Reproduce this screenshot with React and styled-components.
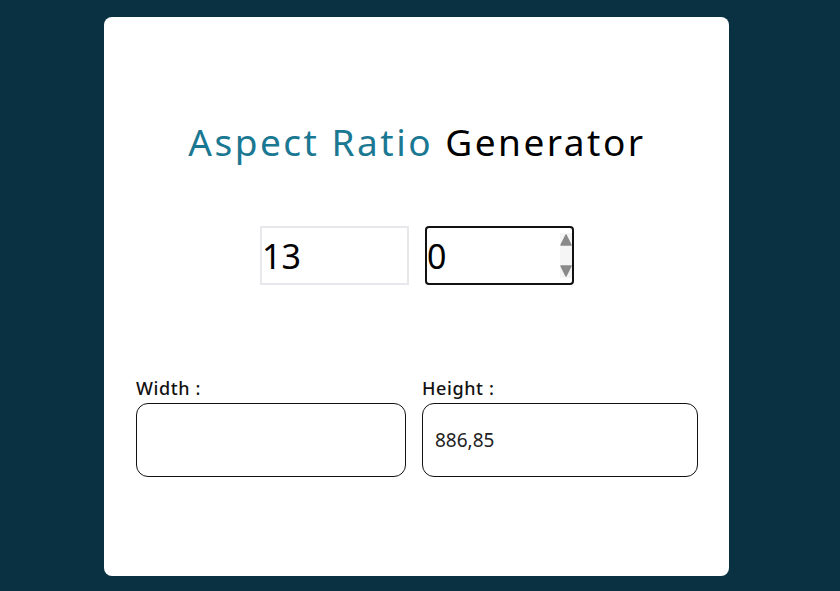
import React from 'react';
import { styled, createGlobalStyle } from 'styled-components';

const GlobalStyle = createGlobalStyle`
  html, body {
    margin: 0;
    padding: 0;
    background: #0a3142;
    font-family: "Noto Sans", sans-serif;
  }
`;

const Page = styled.div`
  height: 591px;
  padding-top: 17px;
  box-sizing: border-box;
`;

const Card = styled.div`
  width: 625px;
  height: 559px;
  margin-left: 104px;
  background: #ffffff;
  border-radius: 8px;
  box-sizing: border-box;
  padding: 101px 31px 0 32px;
  display: flex;
  flex-direction: column;
`;

const Title = styled.h1`
  margin: 0;
  text-align: center;
  font-size: 37px;
  font-weight: 400;
  letter-spacing: 2.5px;
  line-height: 48px;
  color: #000;
`;

const Accent = styled.span`
  color: #1a7892;
`;

const RatioRow = styled.div`
  margin-top: 60px;
  display: flex;
  justify-content: center;
  gap: 16px;
`;

const SpinWrap = styled.div`
  position: relative;
`;

const RatioInput = styled.input`
  width: 149px;
  height: 59px;
  box-sizing: border-box;
  padding: 0;
  font-family: inherit;
  font-size: 34px;
  color: #000;
  background: #fff;
  border: 2px solid ${p => (p.$active ? '#111' : '#e8e8ec')};
  border-radius: ${p => (p.$active ? '4px' : '0')};
  outline: none;
  &::-webkit-inner-spin-button,
  &::-webkit-outer-spin-button {
    -webkit-appearance: none;
    margin: 0;
  }
`;

const Spinner = styled.svg`
  position: absolute;
  right: 2px;
  top: 7px;
`;

const SizeRow = styled.div`
  margin-top: 92px;
  display: grid;
  grid-template-columns: 270px 276px;
  gap: 16px;
`;

const Field = styled.label`
  display: flex;
  flex-direction: column;
  gap: 4px;
`;

const Label = styled.span`
  font-size: 18px;
  font-weight: 500;
  letter-spacing: 0.6px;
  line-height: 22px;
  color: #111;
`;

const SizeInput = styled.input`
  height: 74px;
  box-sizing: border-box;
  border: 1px solid #111;
  border-radius: 12px;
  padding: 0 12px;
  font-family: inherit;
  font-size: 19px;
  color: #222;
  outline: none;
`;

const App = () => {
  return (
    <Page>
      <GlobalStyle />
      <Card>
        <Title>
          <Accent>Aspect Ratio</Accent> Generator
        </Title>
        <RatioRow>
          <RatioInput type="number" defaultValue="13" readOnly />
          <SpinWrap>
            <RatioInput type="number" defaultValue="0" $active readOnly />
            <Spinner width="12" height="45" viewBox="0 0 12 45">
              <rect x="0" y="0" width="12" height="45" fill="#f5f5f5" />
              <path d="M1 12 L6 2 L11 12 Z" fill="#8a8a8a" stroke="#8a8a8a" strokeWidth="1.5" strokeLinejoin="round" />
              <path d="M1 33 L6 43 L11 33 Z" fill="#8a8a8a" stroke="#8a8a8a" strokeWidth="1.5" strokeLinejoin="round" />
            </Spinner>
          </SpinWrap>
        </RatioRow>
        <SizeRow>
          <Field>
            <Label>Width :</Label>
            <SizeInput type="text" defaultValue="" />
          </Field>
          <Field>
            <Label>Height :</Label>
            <SizeInput type="text" defaultValue="886,85" />
          </Field>
        </SizeRow>
      </Card>
    </Page>
  );
};

export default App;
